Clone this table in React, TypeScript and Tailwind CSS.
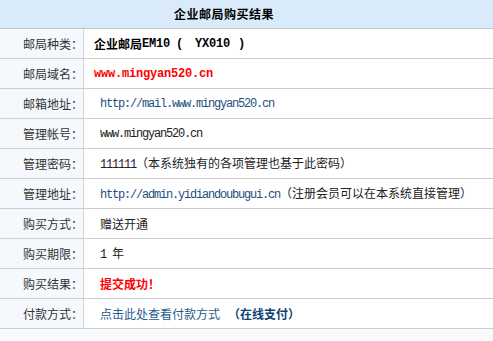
const cjk = "font-['Noto_Sans_CJK_SC',sans-serif]"
const monoFace = "font-['Liberation_Mono','Noto_Sans_CJK_SC',monospace]"
// thin ascii runs: 6px per glyph, bold ones: 7px
const mono = `${monoFace} tracking-[-1.2px]`
const monoBold = `${monoFace} tracking-[-0.2px] font-bold`

type Row = { label: string; value: React.ReactNode; pad?: string }

const rows: Row[] = [
  {
    label: "邮局种类：",
    pad: "pl-[10px]",
    value: (
      <span className="font-bold text-black flex items-center">
        企业邮局
        <span className={monoBold}>EM10</span>
        <span className={`${monoBold} ml-[6px]`}>(</span>
        <span className={`${monoBold} ml-[12px]`}>YX010</span>
        <span className={`${monoBold} ml-[8px]`}>)</span>
      </span>
    ),
  },
  {
    label: "邮局域名：",
    pad: "pl-[10px]",
    value: <span className={`${monoBold} text-[#ff0000]`}>www.mingyan520.cn</span>,
  },
  {
    label: "邮箱地址：",
    value: <span className={`${mono} text-[#1d4f80]`}>http://mail.www.mingyan520.cn</span>,
  },
  {
    label: "管理帐号：",
    value: <span className={`${mono} text-[#222]`}>www.mingyan520.cn</span>,
  },
  {
    label: "管理密码：",
    value: (
      <span className="text-[#222]">
        <span className={mono}>111111</span>（本系统独有的各项管理也基于此密码）
      </span>
    ),
  },
  {
    label: "管理地址：",
    value: (
      <span className="text-[#222] whitespace-nowrap">
        <span className={`${mono} text-[#1d4f80]`}>http://admin.yidiandoubugui.cn</span>
        （注册会员可以在本系统直接管理）
      </span>
    ),
  },
  { label: "购买方式：", value: <span className="text-[#222]">赠送开通</span> },
  {
    label: "购买期限：",
    value: (
      <span className="text-[#222] whitespace-pre">
        <span className={mono}>1 </span>年
      </span>
    ),
  },
  {
    label: "购买结果：",
    value: <span className="font-bold text-[#ff0000]">提交成功！</span>,
  },
  {
    label: "付款方式：",
    value: (
      <span className="text-[#245a8c]">
        点击此处查看付款方式
        <span className="ml-[8px] font-bold text-[#0f4274]">（在线支付）</span>
      </span>
    ),
  },
]

export default function App() {
  return (
    <div className={`w-[493px] h-[341px] bg-[#f7fbfe] text-[12px] leading-none ${cjk}`}>
      <div className="h-[29px] bg-[#d9eafa] border-b border-[#c6c6c6] flex items-center pl-[174px]">
        <span className="font-bold text-black tracking-[0.5px]">企业邮局购买结果</span>
      </div>

      {rows.map((row) => (
        <div key={row.label} className="h-[30px] flex border-b border-[#cdcdcd]">
          <div className="w-[84px] shrink-0 bg-[#f5f9fd] border-r border-[#d3d3d3] flex items-center justify-end text-[#333]">
            {row.label}
          </div>
          <div className={`flex-1 bg-white flex items-center ${row.pad ?? "pl-[16px]"}`}>
            {row.value}
          </div>
        </div>
      ))}
    </div>
  )
}
